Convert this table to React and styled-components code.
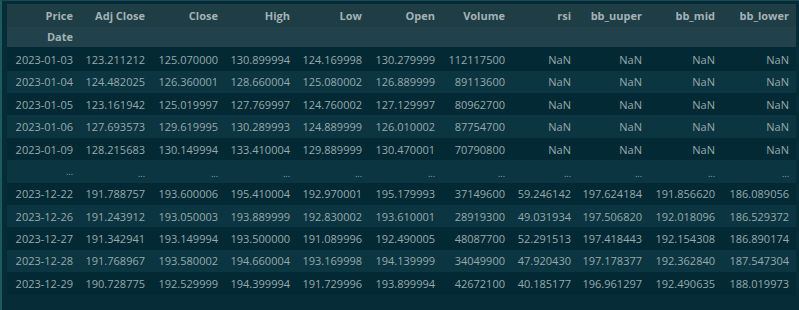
import styled, { createGlobalStyle } from "styled-components";

const GlobalStyle = createGlobalStyle`
  html, body {
    margin: 0;
    padding: 0;
    background: #062d37;
  }
`;

const Frame = styled.div`
  box-sizing: border-box;
  width: 799px;
  height: 310px;
  overflow: hidden;
  background: #062d37;
  border-left: 2px solid #1c5a5e;
  border-top: 1px solid #164a50;
  padding: 3px 0 0 5px;
  font-family: "Open Sans", "Noto Sans", sans-serif;
  font-size: 11px;
  color: #97a9ad;
`;

const Table = styled.table`
  border-collapse: collapse;
  table-layout: fixed;
  width: 789px;
  background: #032a34;
`;

const HeadRow = styled.tr`
  background: ${(props) => (props.second ? "#21424a" : "#1e3d45")};
  height: ${(props) => (props.second ? "21.6px" : "22.7px")};
`;

const HeadCell = styled.th`
  padding: 0 7px 0 0;
  text-align: right;
  font-weight: 700;
  color: #a3b2b5;
  white-space: nowrap;
  ${(props) => props.last && "border-bottom: 2.3px solid #032a34;"}
`;

const Row = styled.tr`
  height: 22.4px;
  background: ${(props) => (props.striped ? "#0b3540" : "#032a34")};
`;

const Cell = styled.td`
  padding: 0 7px 0 0;
  text-align: right;
  white-space: nowrap;
  ${(props) => props.gap && "font-size: 9px; padding-top: 4px;"}
`;

const IndexCell = styled.th`
  padding: 0 7px 0 0;
  text-align: right;
  font-weight: 400;
  white-space: nowrap;
`;

const widths = [73, 72, 73, 72, 72, 73, 70, 66, 71, 73, 74];
const columns = ["Adj Close", "Close", "High", "Low", "Open", "Volume", "rsi", "bb_uuper", "bb_mid", "bb_lower"];

const rows = [
  ["2023-01-03", "123.211212", "125.070000", "130.899994", "124.169998", "130.279999", "112117500", "NaN", "NaN", "NaN", "NaN"],
  ["2023-01-04", "124.482025", "126.360001", "128.660004", "125.080002", "126.889999", "89113600", "NaN", "NaN", "NaN", "NaN"],
  ["2023-01-05", "123.161942", "125.019997", "127.769997", "124.760002", "127.129997", "80962700", "NaN", "NaN", "NaN", "NaN"],
  ["2023-01-06", "127.693573", "129.619995", "130.289993", "124.889999", "126.010002", "87754700", "NaN", "NaN", "NaN", "NaN"],
  ["2023-01-09", "128.215683", "130.149994", "133.410004", "129.889999", "130.470001", "70790800", "NaN", "NaN", "NaN", "NaN"],
  ["...", "...", "...", "...", "...", "...", "...", "...", "...", "...", "..."],
  ["2023-12-22", "191.788757", "193.600006", "195.410004", "192.970001", "195.179993", "37149600", "59.246142", "197.624184", "191.856620", "186.089056"],
  ["2023-12-26", "191.243912", "193.050003", "193.889999", "192.830002", "193.610001", "28919300", "49.031934", "197.506820", "192.018096", "186.529372"],
  ["2023-12-27", "191.342941", "193.149994", "193.500000", "191.089996", "192.490005", "48087700", "52.291513", "197.418443", "192.154308", "186.890174"],
  ["2023-12-28", "191.768967", "193.580002", "194.660004", "193.169998", "194.139999", "34049900", "47.920430", "197.178377", "192.362840", "187.547304"],
  ["2023-12-29", "190.728775", "192.529999", "194.399994", "191.729996", "193.899994", "42672100", "40.185177", "196.961297", "192.490635", "188.019973"],
];

const App = () => {
  return (
    <>
      <GlobalStyle />
      <Frame>
        <Table>
          <colgroup>
            {widths.map((w, i) => (
              <col key={i} style={{ width: w }} />
            ))}
          </colgroup>
          <thead>
            <HeadRow>
              <HeadCell>Price</HeadCell>
              {columns.map((c) => (
                <HeadCell key={c}>{c}</HeadCell>
              ))}
            </HeadRow>
            <HeadRow second>
              <HeadCell last>Date</HeadCell>
              {columns.map((c) => (
                <HeadCell key={c} last />
              ))}
            </HeadRow>
          </thead>
          <tbody>
            {rows.map((r, i) => {
              const gap = r[0] === "...";
              return (
                <Row key={i} striped={i % 2 === 1}>
                  <IndexCell as={gap ? Cell : undefined} gap={gap}>{r[0]}</IndexCell>
                  {r.slice(1).map((v, j) => (
                    <Cell key={j} gap={gap}>{v}</Cell>
                  ))}
                </Row>
              );
            })}
          </tbody>
        </Table>
      </Frame>
    </>
  );
};

export default App;
